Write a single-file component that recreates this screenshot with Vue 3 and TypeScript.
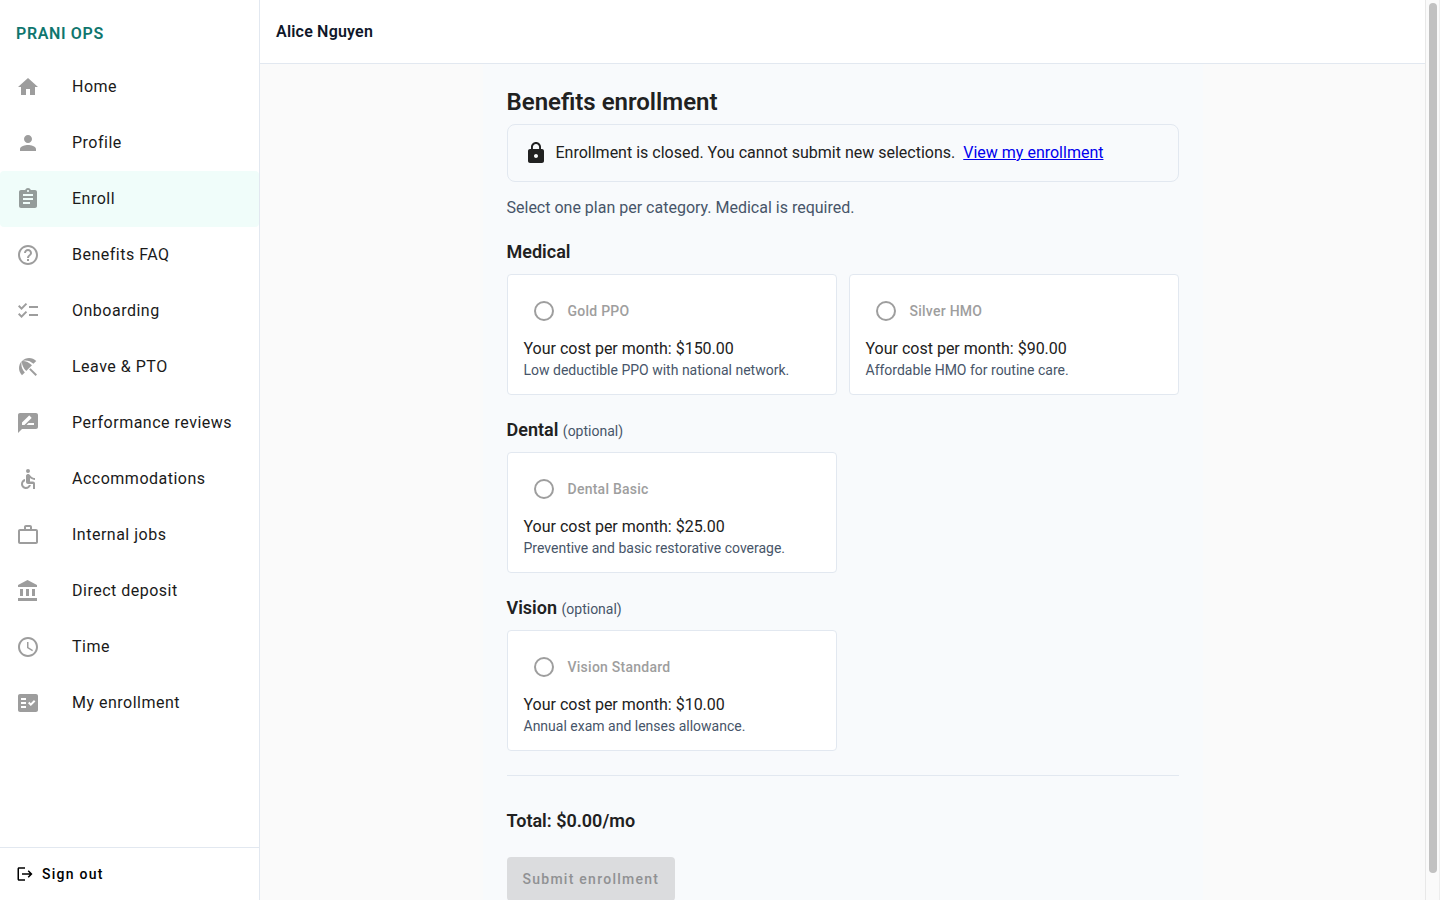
<script setup lang="ts">
import { ref } from 'vue'

interface NavItem {
  label: string
  icon: string
}

interface Plan {
  id: string
  name: string
  cost: string
  description: string
}

interface Category {
  id: string
  title: string
  optional: boolean
  plans: Plan[]
}

const navItems: NavItem[] = [
  { label: 'Home', icon: 'M10 20v-6h4v6h5v-8h3L12 3 2 12h3v8z' },
  { label: 'Profile', icon: 'M12 12c2.21 0 4-1.79 4-4s-1.79-4-4-4-4 1.79-4 4 1.79 4 4 4zm0 2c-2.67 0-8 1.34-8 4v2h16v-2c0-2.66-5.33-4-8-4z' },
  { label: 'Enroll', icon: 'M19 3h-4.18C14.4 1.84 13.3 1 12 1c-1.3 0-2.4.84-2.82 2H5c-1.1 0-2 .9-2 2v14c0 1.1.9 2 2 2h14c1.1 0 2-.9 2-2V5c0-1.1-.9-2-2-2zm-7 0c.55 0 1 .45 1 1s-.45 1-1 1-1-.45-1-1 .45-1 1-1zm2 14H7v-2h7v2zm3-4H7v-2h10v2zm0-4H7V7h10v2z' },
  { label: 'Benefits FAQ', icon: 'M11 18h2v-2h-2v2zm1-16C6.48 2 2 6.48 2 12s4.48 10 10 10 10-4.48 10-10S17.52 2 12 2zm0 18c-4.41 0-8-3.59-8-8s3.59-8 8-8 8 3.59 8 8-3.59 8-8 8zm0-14c-2.21 0-4 1.79-4 4h2c0-1.1.9-2 2-2s2 .9 2 2c0 2-3 1.75-3 5h2c0-2.25 3-2.5 3-5 0-2.21-1.79-4-4-4z' },
  { label: 'Onboarding', icon: 'M22 7h-9v2h9V7zm0 8h-9v2h9v-2zM5.54 11L2 7.46l1.41-1.41 2.12 2.12 4.24-4.24 1.41 1.41L5.54 11zm0 8L2 15.46l1.41-1.41 2.12 2.12 4.24-4.24 1.41 1.41L5.54 19z' },
  { label: 'Leave & PTO', icon: 'M13.127 14.56l1.43-1.43 6.44 6.443L19.57 21zm4.293-5.73l2.86-2.86c-3.95-3.95-10.35-3.96-14.3-.02 3.93-1.3 8.31-.25 11.44 2.88zM5.95 5.98c-3.94 3.95-3.93 10.35.02 14.3l2.86-2.86C5.7 14.29 4.65 9.91 5.95 5.98zm.02-.02l-.01.01c-.38 3.01 1.17 6.88 4.3 10.02l5.73-5.73c-3.13-3.13-7.01-4.68-10.02-4.3z' },
  { label: 'Performance reviews', icon: 'M20 2H4c-1.1 0-1.99.9-1.99 2L2 22l4-4h14c1.1 0 2-.9 2-2V4c0-1.1-.9-2-2-2zM6 14v-2.47l6.88-6.88c.2-.2.51-.2.71 0l1.77 1.77c.2.2.2.51 0 .71L8.47 14H6zm12 0h-7.5l2-2H18v2z' },
  { label: 'Accommodations', icon: 'M12 2a2 2 0 1 1 0 4 2 2 0 0 1 0-4zM19 13v-2c-1.54.02-3.09-.75-4.07-1.83l-1.29-1.43c-.17-.19-.38-.34-.61-.45-.01 0-.01-.01-.02-.01H13c-.35-.2-.75-.3-1.19-.26C10.76 7.11 10 8.04 10 9.09V15c0 1.1.9 2 2 2h5v5h2v-5.5c0-1.1-.9-2-2-2h-3v-3.45c1.29 1.07 3.25 1.94 5 1.95zm-6.17 5c-.41 1.16-1.52 2-2.83 2-1.66 0-3-1.34-3-3 0-1.31.84-2.41 2-2.83V12.1c-2.28.46-4 2.48-4 4.9 0 2.76 2.24 5 5 5 2.42 0 4.44-1.72 4.9-4h-2.07z' },
  { label: 'Internal jobs', icon: 'M14 6V4h-4v2h4zM4 8v11h16V8H4zm16-2c1.11 0 2 .89 2 2v11c0 1.11-.89 2-2 2H4c-1.11 0-2-.89-2-2l.01-11c0-1.11.88-2 1.99-2h4V4c0-1.11.89-2 2-2h4c1.11 0 2 .89 2 2v2h4z' },
  { label: 'Direct deposit', icon: 'M4 10v7h3v-7H4zm6 0v7h3v-7h-3zM2 22h19v-3H2v3zm14-12v7h3v-7h-3zm-4.5-9L2 6v2h19V6l-9.5-5z' },
  { label: 'Time', icon: 'M11.99 2C6.47 2 2 6.48 2 12s4.47 10 9.99 10C17.52 22 22 17.52 22 12S17.52 2 11.99 2zM12 20c-4.42 0-8-3.58-8-8s3.58-8 8-8 8 3.58 8 8-3.58 8-8 8zm.5-13H11v6l5.25 3.15.75-1.23-4.5-2.67z' },
  { label: 'My enrollment', icon: 'M20 3H4c-1.1 0-2 .9-2 2v14c0 1.1.9 2 2 2h16c1.1 0 2-.9 2-2V5c0-1.1-.9-2-2-2zM10 17H5v-2h5v2zm0-4H5v-2h5v2zm0-4H5V7h5v2zm4.82 6L12 12.16l1.41-1.41 1.41 1.42L17.99 9l1.42 1.42L14.82 15z' },
]

const activeItem = ref<string>('Enroll')

const categories: Category[] = [
  {
    id: 'medical',
    title: 'Medical',
    optional: false,
    plans: [
      { id: 'gold-ppo', name: 'Gold PPO', cost: '$150.00', description: 'Low deductible PPO with national network.' },
      { id: 'silver-hmo', name: 'Silver HMO', cost: '$90.00', description: 'Affordable HMO for routine care.' },
    ],
  },
  {
    id: 'dental',
    title: 'Dental',
    optional: true,
    plans: [
      { id: 'dental-basic', name: 'Dental Basic', cost: '$25.00', description: 'Preventive and basic restorative coverage.' },
    ],
  },
  {
    id: 'vision',
    title: 'Vision',
    optional: true,
    plans: [
      { id: 'vision-standard', name: 'Vision Standard', cost: '$10.00', description: 'Annual exam and lenses allowance.' },
    ],
  },
]
</script>

<template>
  <div class="shell">
    <aside class="sidebar">
      <div class="brand">PRANI OPS</div>
      <nav class="nav">
        <a
          v-for="item in navItems"
          :key="item.label"
          href="#"
          class="nav-item"
          :class="{ active: item.label === activeItem }"
          @click.prevent="activeItem = item.label"
        >
          <svg class="nav-icon" viewBox="0 0 24 24" aria-hidden="true"><path :d="item.icon" /></svg>
          <span>{{ item.label }}</span>
        </a>
      </nav>
      <div class="sidebar-foot">
        <button type="button" class="sign-out">
          <svg class="exit-icon" viewBox="0 0 24 24" aria-hidden="true">
            <path d="M17 7l-1.41 1.41L18.17 11H8v2h10.17l-2.58 2.58L17 17l5-5zM4 5h8V3H4c-1.1 0-2 .9-2 2v14c0 1.1.9 2 2 2h8v-2H4V5z" />
          </svg>
          Sign out
        </button>
      </div>
    </aside>

    <div class="main">
      <header class="topbar">Alice Nguyen</header>
      <main class="content">
        <div class="column">
          <h1>Benefits enrollment</h1>
          <div class="notice">
            <svg class="lock" viewBox="0 0 24 24" aria-hidden="true">
              <path d="M18 8h-1V6c0-2.76-2.24-5-5-5S7 3.24 7 6v2H6c-1.1 0-2 .9-2 2v10c0 1.1.9 2 2 2h12c1.1 0 2-.9 2-2V10c0-1.1-.9-2-2-2zm-6 9c-1.1 0-2-.9-2-2s.9-2 2-2 2 .9 2 2-.9 2-2 2zm3.1-9H8.9V6c0-1.71 1.39-3.1 3.1-3.1 1.71 0 3.1 1.39 3.1 3.1v2z" />
            </svg>
            <span>Enrollment is closed. You cannot submit new selections.</span>
            <a href="#">View my enrollment</a>
          </div>
          <p class="intro">Select one plan per category. Medical is required.</p>

          <section v-for="category in categories" :key="category.id" class="category">
            <h2>{{ category.title }} <span v-if="category.optional" class="optional">(optional)</span></h2>
            <div class="plans">
              <div v-for="plan in category.plans" :key="plan.id" class="plan">
                <label class="choice">
                  <input type="radio" :name="category.id" :value="plan.id" disabled />
                  <span>{{ plan.name }}</span>
                </label>
                <div class="cost">Your cost per month: {{ plan.cost }}</div>
                <div class="description">{{ plan.description }}</div>
              </div>
            </div>
          </section>

          <div class="summary">
            <div class="total">Total: $0.00/mo</div>
            <button type="button" class="submit" disabled>Submit enrollment</button>
          </div>
        </div>
      </main>
    </div>

    <div class="scroll-track" aria-hidden="true"><div class="scroll-thumb"></div></div>
  </div>
</template>

<style>
body {
  margin: 0;
  background: #fafafa;
}
</style>

<style scoped>
.shell {
  display: flex;
  height: 100vh;
  overflow: hidden;
  box-sizing: border-box;
  font-family: Roboto, "Liberation Sans", sans-serif;
  font-size: 16px;
  line-height: 24px;
  color: #212121;
  background: #fafafa;
}

.sidebar {
  display: flex;
  flex-direction: column;
  flex: none;
  box-sizing: border-box;
  width: 260px;
  background: #fff;
  border-right: 1px solid #e2e8f0;
}

.brand {
  padding: 22px 16px 13px;
  font-weight: 600;
  letter-spacing: 0.04em;
  color: #0f766e;
}

.nav {
  flex: 1;
}

.nav-item {
  display: flex;
  align-items: center;
  gap: 32px;
  height: 56px;
  padding: 0 16px;
  border-radius: 4px;
  letter-spacing: 0.03125em;
  color: #1a1a1a;
  text-decoration: none;
}

.nav-item.active {
  background: #f0fdfa;
}

.nav-icon {
  width: 24px;
  height: 24px;
  fill: #000;
  opacity: 0.38;
}

.sidebar-foot {
  padding: 8px;
  border-top: 1px solid #e2e8f0;
}

.sign-out {
  display: flex;
  align-items: center;
  gap: 8px;
  height: 36px;
  padding: 0 8px;
  border: 0;
  background: none;
  font: 500 14px/20px Roboto, "Liberation Sans", sans-serif;
  letter-spacing: 0.09em;
  color: #000;
}

.exit-icon {
  width: 18px;
  height: 18px;
}

.main {
  display: flex;
  flex-direction: column;
  flex: 1;
  min-width: 0;
}

.topbar {
  flex: none;
  box-sizing: border-box;
  height: 64px;
  padding: 20px 16px;
  background: #fff;
  border-bottom: 1px solid #e2e8f0;
  font-weight: 600;
  letter-spacing: 0.0125em;
  color: #0f172a;
}

.content {
  flex: 1;
  min-height: 0;
  overflow: hidden;
}

.column {
  box-sizing: border-box;
  max-width: 720px;
  margin: 0 auto;
  padding: 24px;
  background: #f8fafc;
}

h1 {
  margin: 0 0 8px;
  font-size: 24px;
  line-height: 28px;
  font-weight: 600;
}

.notice {
  display: flex;
  align-items: center;
  gap: 8px;
  padding: 16px;
  border: 1px solid #e2e8f0;
  border-radius: 8px;
}

.lock {
  width: 24px;
  height: 24px;
  fill: #212121;
}

.notice a {
  color: #0000ee;
}

.intro {
  margin: 14px 0 21px;
  color: #475569;
}

.category {
  margin-bottom: 24px;
}

h2 {
  margin: 0 0 11px;
  font-size: 18px;
  line-height: 22px;
  font-weight: 600;
}

.optional {
  font-size: 14px;
  line-height: 14px;
  font-weight: 400;
  color: #475569;
}

.plans {
  display: grid;
  grid-template-columns: 1fr 1fr;
  gap: 12px;
}

.plan {
  padding: 16px 16px 15px;
  background: #fff;
  border: 1px solid #e2e8f0;
  border-radius: 4px;
}

.choice {
  display: flex;
  align-items: center;
  gap: 14px;
  height: 40px;
  padding-left: 10px;
  font-size: 14px;
  font-weight: 500;
  letter-spacing: 0.018em;
  color: #9e9e9e;
}

.choice input {
  appearance: none;
  box-sizing: border-box;
  width: 20px;
  height: 20px;
  margin: 0;
  border: 2px solid #9e9e9e;
  border-radius: 50%;
}

.cost {
  margin-top: 6px;
  line-height: 24px;
}

.description {
  font-size: 14px;
  line-height: 18px;
  color: #475569;
}

.summary {
  padding-top: 32px;
  border-top: 1px solid #e2e8f0;
}

.total {
  margin-bottom: 23px;
  font-size: 18px;
  line-height: 26px;
  font-weight: 600;
}

.submit {
  height: 44px;
  padding: 0 16px;
  border: 0;
  border-radius: 4px;
  background: #dbdcde;
  font: 500 14px/20px Roboto, "Liberation Sans", sans-serif;
  letter-spacing: 0.09em;
  color: #909193;
}

.scroll-track {
  flex: none;
  box-sizing: border-box;
  width: 15px;
  padding: 3px 3px 27px;
  background: #fafafa;
  border-left: 1px solid #e8e8e8;
  border-right: 1px solid #ededed;
}

.scroll-thumb {
  width: 8px;
  height: 100%;
  border-radius: 4px;
  background: #c1c1c1;
}
</style>
